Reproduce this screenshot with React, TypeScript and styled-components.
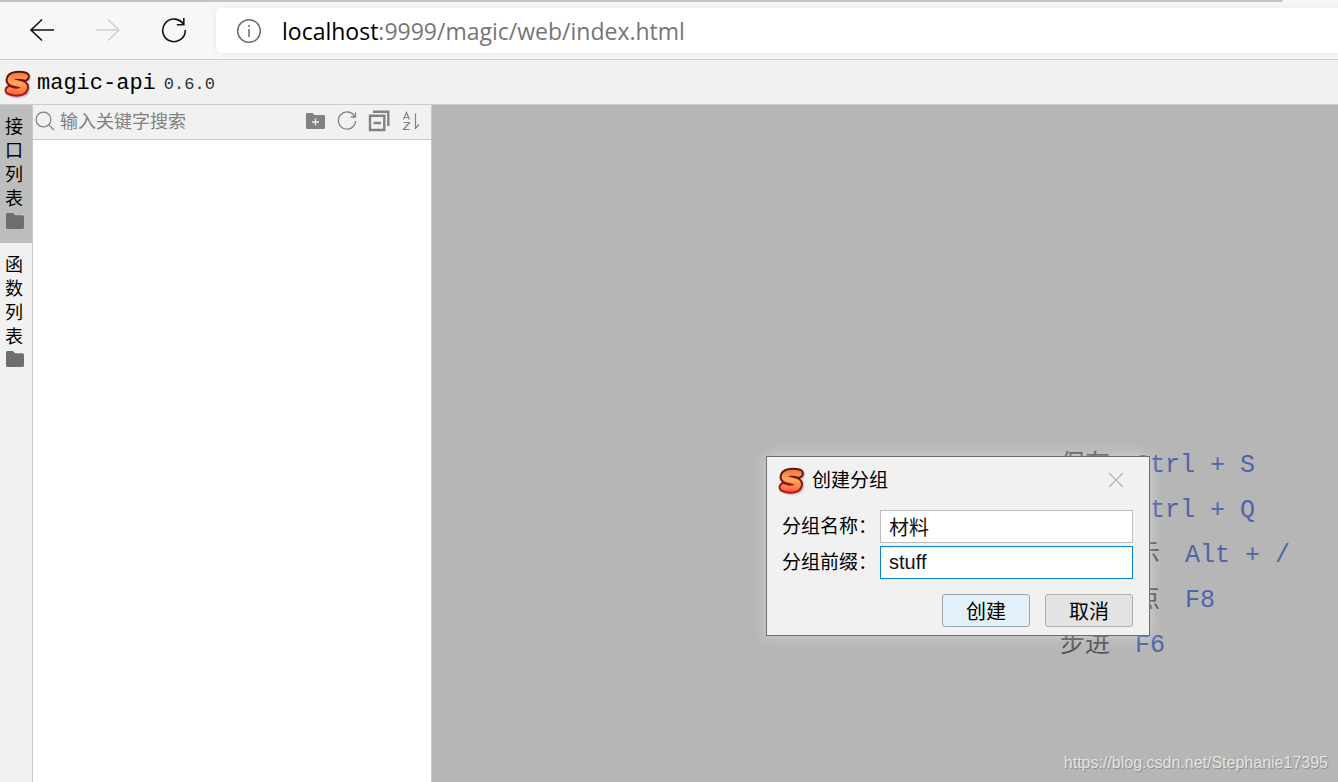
import React from 'react';
import styled, { createGlobalStyle } from 'styled-components';

const sans = '"Open Sans", "Noto Sans CJK SC", sans-serif';
const mono = '"Liberation Mono", "Noto Sans CJK SC", monospace';
const ui = '"Liberation Sans", "Noto Sans CJK SC", sans-serif';

const GlobalStyle = createGlobalStyle`
  *, *::before, *::after { box-sizing: border-box; }
  body { margin: 0; font-family: ${ui}; color: #000; background: #f1f1f1; }
  button, input { font: inherit; margin: 0; }
  svg { display: block; flex: none; }
`;

const Page = styled.div`
  position: relative;
  display: flex;
  flex-direction: column;
  min-height: 100vh;
  overflow: hidden;
`;

const TabStrip = styled.div`
  background: #f7f7f7;
`;

const TabEdge = styled.div`
  height: 2px;
  margin-right: 55px;
  background: #c3c3c3;
  border-radius: 0 0 2px 0;
`;

const BrowserBar = styled.nav`
  display: flex;
  align-items: center;
  height: 58px;
  padding: 6px 0 6px 26px;
  gap: 34px;
  background: #f7f7f7;
  border-bottom: 1px solid #cecece;
`;

const NavButton = styled.button`
  display: flex;
  justify-content: center;
  width: 32px;
  padding: 0 0 2px;
  border: 0;
  background: none;
  color: ${(p) => (p.disabled ? '#cfcfcf' : '#111')};
`;

const AddressBar = styled.div`
  flex: 1;
  display: flex;
  align-items: center;
  gap: 20px;
  height: 45px;
  margin-left: -8px;
  padding-left: 20px;
  background: #fff;
  border-radius: 6px 0 0 6px;
  box-shadow: 0 0 6px rgba(0, 0, 0, 0.07);
`;

const Address = styled.a`
  font: 23px/30px ${sans};
  color: #767676;
  text-decoration: none;
  white-space: nowrap;
`;

const Host = styled.span`
  color: #000;
`;

const Header = styled.header`
  display: flex;
  align-items: center;
  gap: 6px;
  height: 45px;
  padding: 3px 0 0 3px;
  background: #f1f1f1;
  border-bottom: 1px solid #cdcdcd;
`;

const AppName = styled.h1`
  margin: 0;
  font: 22px/24px ${mono};
`;

const Version = styled.small`
  margin-left: 2px;
  padding-top: 3px;
  font: 17px/24px ${mono};
  color: #333;
`;

const Body = styled.div`
  flex: 1;
  display: flex;
`;

const Rail = styled.div`
  width: 33px;
  background: #f1f1f1;
  border-right: 1px solid #c9c9c9;
`;

const RailTab = styled.button<{ $active?: boolean }>`
  display: flex;
  flex-direction: column;
  align-items: center;
  width: 100%;
  height: 138px;
  padding: 10px 2px 0 0;
  border: 0;
  background: ${(p) => (p.$active ? '#bdbdbd' : 'transparent')};
  color: #000;
`;

const RailLabel = styled.span`
  width: 20px;
  text-align: left;
  font: 400 18px/24px ${ui};
  word-break: break-all;
`;

const Explorer = styled.aside`
  width: 399px;
  background: #fff;
  border-right: 1px solid #c9c9c9;
`;

const SearchRow = styled.div`
  display: flex;
  align-items: center;
  height: 35px;
  padding: 0 8px 2px 2px;
  background: #f1f1f1;
  border-bottom: 1px solid #cdcdcd;
`;

const SearchInput = styled.input`
  flex: 1;
  min-width: 0;
  padding: 2px 5px 0;
  border: 0;
  outline: 0;
  background: none;
  font: 400 18px/26px ${ui};
  &::placeholder { color: #808080; opacity: 1; }
`;

const Tools = styled.div`
  display: flex;
  gap: 8px;
`;

const ToolButton = styled.button`
  display: flex;
  padding: 0;
  border: 0;
  background: none;
  color: #828282;
`;

const Workspace = styled.main`
  flex: 1;
  display: flex;
  justify-content: flex-end;
  align-items: flex-start;
  padding: 338px 48px 0 0;
  background: #b6b6b6;
`;

const Shortcuts = styled.ul`
  margin: 0;
  padding: 0;
  list-style: none;
`;

const Shortcut = styled.li`
  display: flex;
  gap: 25px;
  font: 400 25px/45px ${mono};
  color: #555;
  white-space: nowrap;
`;

const Keys = styled.kbd`
  font: 25px/45px ${mono};
  color: #5064a6;
`;

const Dialog = styled.form`
  position: absolute;
  top: 456px;
  left: 766px;
  width: 384px;
  padding: 10px 16px 8px 15px;
  background: #f1f1f1;
  border: 1px solid #6e6e6e;
  box-shadow: 0 0 14px rgba(255, 255, 255, 0.4);
`;

const DialogHead = styled.div`
  display: flex;
  align-items: center;
  gap: 7px;
  height: 28px;
  margin: 0 8px 15px -5px;
`;

const DialogTitle = styled.h2`
  flex: 1;
  margin: 0;
  font: 400 19px/26px ${ui};
`;

const CloseButton = styled.button`
  padding: 0 0 2px;
  border: 0;
  background: none;
  color: #adb9c0;
`;

const Field = styled.label`
  display: flex;
  align-items: center;
  height: 33px;
  margin-bottom: 3px;
  font: 400 19px/26px ${ui};
`;

const FieldName = styled.span`
  width: 98px;
  white-space: nowrap;
`;

const TextInput = styled.input<{ $focused?: boolean }>`
  flex: 1;
  min-width: 0;
  height: 33px;
  padding: 0 8px;
  border: 1px solid ${(p) => (p.$focused ? '#0a84d8' : '#bdbdbd')};
  border-radius: 0;
  outline: 0;
  background: #fff;
  font: 400 20px/28px ${ui};
  color: #111;
`;

const Actions = styled.div`
  display: flex;
  justify-content: flex-end;
  gap: 15px;
  margin-top: 15px;
`;

const ActionButton = styled.button<{ $primary?: boolean }>`
  width: 88px;
  height: 33px;
  padding: 2px 0 0;
  border: 1px solid ${(p) => (p.$primary ? '#9aa5ad' : '#adadad')};
  border-radius: 3px;
  background: ${(p) => (p.$primary ? '#e3f1fa' : '#e3e3e3')};
  font: 400 20px/28px ${ui};
  color: #000;
`;

const Watermark = styled.a`
  position: absolute;
  right: 10px;
  bottom: 8px;
  font: 16px/22px ${ui};
  color: #e4e4e4;
  text-decoration: none;
  text-shadow: 1px 1px 1px rgba(0, 0, 0, 0.25);
`;

const S_PATH = 'M21.8 6.6C17 5 8 5.2 7.6 9.8C7.2 14 21.4 12.6 21 17.6C20.6 22.4 12 22.6 6.6 20.2';

function Logo({ id }: { id: string }) {
  return (
    <svg width="28" height="30" viewBox="0 0 28 30" fill="none" aria-hidden="true">
      <defs>
        <linearGradient id={id} gradientUnits="userSpaceOnUse" x1="14" y1="2" x2="14" y2="26">
          <stop offset="0" stopColor="#f5703f" />
          <stop offset="0.45" stopColor="#ffa85a" />
          <stop offset="1" stopColor="#ff5a36" />
        </linearGradient>
        <linearGradient id={`${id}-edge`} gradientUnits="userSpaceOnUse" x1="14" y1="2" x2="14" y2="26">
          <stop offset="0" stopColor="#5c1414" />
          <stop offset="0.5" stopColor="#7c1616" />
          <stop offset="1" stopColor="#b81414" />
        </linearGradient>
      </defs>
      <path d={S_PATH} transform="translate(1 2)" stroke="#000" strokeOpacity="0.16" strokeWidth="11" strokeLinecap="round" />
      <path d={S_PATH} transform="translate(0 1)" stroke={`url(#${id}-edge)`} strokeWidth="10" strokeLinecap="round" strokeLinejoin="round" />
      <path d={S_PATH} transform="translate(0 1)" stroke={`url(#${id})`} strokeWidth="6" strokeLinecap="round" />
    </svg>
  );
}

function Folder() {
  return (
    <svg width="20" height="20" viewBox="0 0 20 20" fill="#6e6e6e" aria-hidden="true">
      <path d="M1 3.5Q1 2 2.5 2H8L10.2 4.2H17.5Q19 4.2 19 5.7V16.5Q19 18 17.5 18H2.5Q1 18 1 16.5Z" />
    </svg>
  );
}

const shortcuts = [
  ['保存', 'Ctrl + S'],
  ['测试', 'Ctrl + Q'],
  ['代码提示', 'Alt + /'],
  ['恢复断点', 'F8'],
  ['步进', 'F6'],
];

export default function App() {
  return (
    <Page>
      <GlobalStyle />
      <TabStrip>
        <TabEdge />
      </TabStrip>
      <BrowserBar>
        <NavButton aria-label="Back">
          <svg width="26" height="26" viewBox="0 0 26 26" fill="none" stroke="currentColor" strokeWidth="1.6">
            <path d="M25 13H2M13 2.5L2 13L13 23.5" />
          </svg>
        </NavButton>
        <NavButton aria-label="Forward" disabled>
          <svg width="26" height="26" viewBox="0 0 26 26" fill="none" stroke="currentColor" strokeWidth="1.4">
            <path d="M1 13H24M13 2.5L24 13L13 23.5" />
          </svg>
        </NavButton>
        <NavButton aria-label="Refresh">
          <svg width="26" height="26" viewBox="0 0 26 26" fill="none" stroke="currentColor" strokeWidth="1.6">
            <path d="M22.6 7.4A11.3 11.3 0 1 0 24.3 13M22.8 1V7.8H15.8" />
          </svg>
        </NavButton>
        <AddressBar>
          <svg width="26" height="26" viewBox="0 0 26 26" fill="none" stroke="#6b6b6b" strokeWidth="1.5" aria-hidden="true">
            <circle cx="13" cy="13" r="11.3" />
            <path d="M13 11V19M13 7V9" />
          </svg>
          <Address href="#">
            <Host>localhost</Host>:9999/magic/web/index.html
          </Address>
        </AddressBar>
      </BrowserBar>
      <Header>
        <Logo id="logo-header" />
        <AppName>magic-api</AppName>
        <Version>0.6.0</Version>
      </Header>
      <Body>
        <Rail>
          <RailTab $active>
            <RailLabel>接口列表</RailLabel>
            <Folder />
          </RailTab>
          <RailTab>
            <RailLabel>函数列表</RailLabel>
            <Folder />
          </RailTab>
        </Rail>
        <Explorer>
          <SearchRow>
            <svg width="20" height="20" viewBox="0 0 20 20" fill="none" stroke="#808080" strokeWidth="1.2" aria-hidden="true">
              <circle cx="8.5" cy="8.5" r="7.4" />
              <path d="M13.8 13.8L19 19" />
            </svg>
            <SearchInput aria-label="搜索" placeholder="输入关键字搜索" />
            <Tools>
              <ToolButton aria-label="新建分组">
                <svg width="24" height="24" viewBox="0 0 24 24">
                  <path d="M3 5.2Q3 4 4.2 4H9.5L11.5 6H20.8Q22 6 22 7.2V18.8Q22 20 20.8 20H4.2Q3 20 3 18.8Z" fill="currentColor" />
                  <path d="M12.5 9.5V16.5M9 13H16" stroke="#f1f1f1" strokeWidth="1.3" />
                </svg>
              </ToolButton>
              <ToolButton aria-label="刷新">
                <svg width="24" height="24" viewBox="0 0 24 24" fill="none" stroke="currentColor" strokeWidth="1.3">
                  <path d="M19.6 7.5A8.6 8.6 0 1 0 20.6 12M20.5 3.5V8H16" />
                </svg>
              </ToolButton>
              <ToolButton aria-label="全部折叠">
                <svg width="24" height="24" viewBox="0 0 24 24" fill="none" stroke="currentColor" strokeWidth="2.4">
                  <path d="M3 6.7H17.3V21H3ZM6.5 14H14M6 2.7H21.3V17" />
                </svg>
              </ToolButton>
              <ToolButton aria-label="排序">
                <svg width="24" height="24" viewBox="0 0 24 24" fill="none" stroke="currentColor" strokeWidth="1.2">
                  <path d="M4.5 10.5L7.5 3.5L10.5 10.5M5.5 8.5H9.5M4.5 13.5H10.5L4.5 20.5H10.5M16.5 4.5V19.5L20 15.5" />
                </svg>
              </ToolButton>
            </Tools>
          </SearchRow>
        </Explorer>
        <Workspace>
          <Shortcuts>
            {shortcuts.map(([name, keys]) => (
              <Shortcut key={name}>
                {name}
                <Keys>{keys}</Keys>
              </Shortcut>
            ))}
          </Shortcuts>
        </Workspace>
      </Body>
      <Dialog role="dialog" aria-labelledby="dialog-title" onSubmit={(e) => e.preventDefault()}>
        <DialogHead>
          <Logo id="logo-dialog" />
          <DialogTitle id="dialog-title">创建分组</DialogTitle>
          <CloseButton type="button" aria-label="关闭">
            <svg width="18" height="18" viewBox="0 0 18 18" fill="none" stroke="currentColor" strokeWidth="1.3">
              <path d="M2 2L16 16M16 2L2 16" />
            </svg>
          </CloseButton>
        </DialogHead>
        <Field>
          <FieldName>分组名称：</FieldName>
          <TextInput defaultValue="材料" />
        </Field>
        <Field>
          <FieldName>分组前缀：</FieldName>
          <TextInput defaultValue="stuff" $focused />
        </Field>
        <Actions>
          <ActionButton type="submit" $primary>创建</ActionButton>
          <ActionButton type="button">取消</ActionButton>
        </Actions>
      </Dialog>
      <Watermark href="https://blog.csdn.net/Stephanie17395">https://blog.csdn.net/Stephanie17395</Watermark>
    </Page>
  );
}
